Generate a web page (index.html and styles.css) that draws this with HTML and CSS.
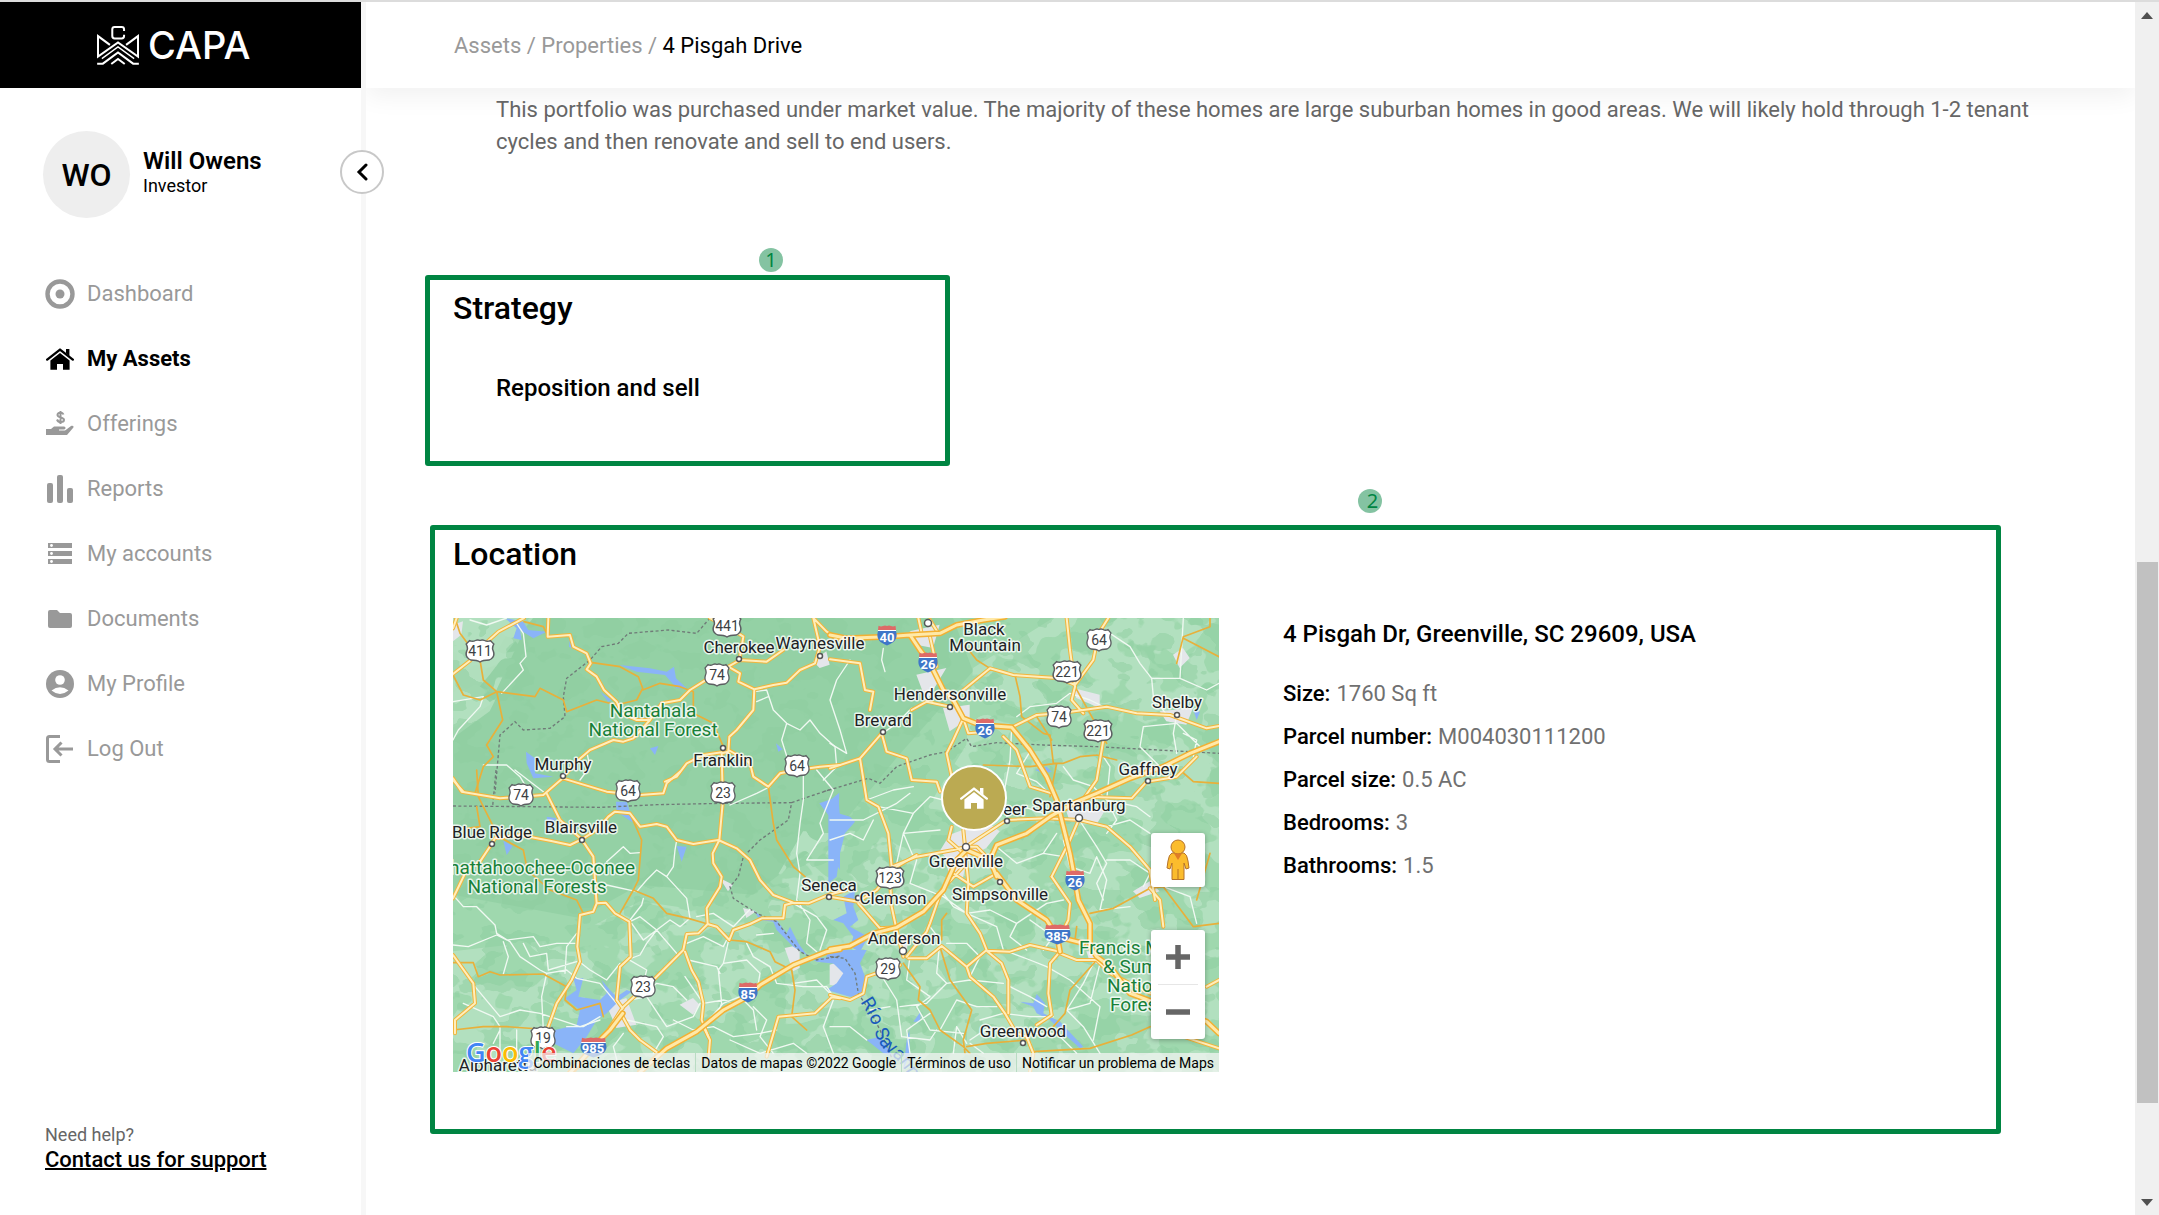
FILE: index.html
```html
<!DOCTYPE html>
<html lang="en">
<head>
<meta charset="utf-8">
<meta name="viewport" content="width=device-width, initial-scale=1">
<title>CAPA – 4 Pisgah Drive</title>
<link rel="stylesheet" href="styles.css">
</head>
<body>
<svg class="defs" aria-hidden="true">
  <defs>
    <symbol id="i-house" viewBox="0 0 28 22">
      <path d="M1.2 11.6 14 1.6 26.8 11.6" fill="none" stroke="currentColor" stroke-width="2.4" stroke-linecap="round" stroke-linejoin="round"/>
      <path d="M20 1h3.4v7L20 5.300zM14 5 23.600 12.400V21.800H17V16h-6v5.800H4.400V12.400z" fill="currentColor"/>
    </symbol>
    <symbol id="us2" viewBox="0 0 26 24" preserveAspectRatio="none">
      <path d="M4 1.500Q6.500 3 9 1.500 11 .5 13 1.500 15 .5 17 1.500 19.500 3 22 1.500L25 5Q23 9 24.500 12 26.500 18 21 21 15.500 21 13 23 10.500 21 5 21-.5 18 1.500 12 3 9 1 5Z" fill="#fff" stroke="#5c5f62" stroke-width="1.300"/>
    </symbol>
    <symbol id="ihw" viewBox="0 0 20 21" preserveAspectRatio="none">
      <path d="M1 6H19Q21 13 16.500 17 13 19 10 20.500 7 19 3.500 17-1 13 1 6Z" fill="#3f76c8"/>
      <path d="M1 5 1.500.8Q4 2 6 1 8 .2 10 1 12 .2 14 1 16 2 18.500.8L19 5Z" fill="#de6a67"/>
      <path d="M1 5.500H19" stroke="#fff"/>
    </symbol>
  </defs>
</svg>

<div class="app">
  <aside class="sidebar">
    <a class="logo" href="#" aria-label="CAPA home">
      <svg class="logo-mark" viewBox="0 0 124 116" fill="none" stroke="#fff" stroke-width="6" aria-hidden="true">
        <path d="M80 15V10Q80 3 73 3H52Q45 3 45 10V30Q45 37 52 37H73Q80 37 80 30V26"/>
        <path d="M38 56 2.500 30V91L62 49 121.500 91V30L86 56"/>
        <path d="M14 97 62 62 110 97" stroke-width="4"/>
        <path d="M0 112H17L62 79 107 112H124"/>
        <path d="M42 113 62 98 82 113"/>
      </svg>
      <span class="logo-text">CAPA</span>
    </a>
    <div class="profile">
      <div class="avatar">WO</div>
      <div class="profile-text">
        <div class="profile-name">Will Owens</div>
        <div class="profile-role">Investor</div>
      </div>
    </div>
    <button class="collapse" type="button" aria-label="Collapse menu">
      <svg viewBox="0 0 12 18" width="12" height="18"><path d="M10 2 3 9l7 7" fill="none" stroke="#000" stroke-width="3" stroke-linecap="round"/></svg>
    </button>
    <nav class="nav">
      <a href="#"><svg viewBox="0 0 30 30"><circle cx="15" cy="15" r="12.500" fill="none" stroke="currentColor" stroke-width="4.400"/><circle cx="15" cy="15" r="4.500" fill="currentColor"/></svg>Dashboard</a>
      <a href="#" class="active"><svg viewBox="-1 -4 30 30"><use href="#i-house" width="28" height="22"/></svg>My Assets</a>
      <a href="#"><svg viewBox="0 0 30 30" fill="currentColor"><path d="M1 20h5l3-2.500h10c2 0 2 3 0 3h-5v1h6l6-4.500c2-1.200 3.500.8 2 2L22 26H1z"/><path d="M18.500 5.500C17.500 3 12.500 3 12.500 6s6.500 2 6.500 4.800-5.500 3.400-7-.3M15.500 2v13" fill="none" stroke="currentColor" stroke-width="2"/></svg>Offerings</a>
      <a href="#"><svg viewBox="0 0 30 30" fill="currentColor"><rect x="2" y="9" width="6" height="20" rx="2"/><rect x="12" y="1" width="6" height="28" rx="2"/><rect x="22" y="14" width="6" height="15" rx="2"/></svg>Reports</a>
      <a href="#"><svg viewBox="0 0 30 30" fill="currentColor"><path d="M3 4h24v5H3zM3 12h24v5H3zM3 20h24v5H3z"/><g fill="#fff"><circle cx="6.500" cy="6.500" r="1.400"/><circle cx="6.500" cy="14.500" r="1.400"/><circle cx="6.500" cy="22.500" r="1.400"/></g></svg>My accounts</a>
      <a href="#"><svg viewBox="0 0 30 30" fill="currentColor"><path d="M5 6h7l3 3h10q2 0 2 2v11q0 2-2 2H5q-2 0-2-2V8q0-2 2-2z"/></svg>Documents</a>
      <a href="#"><svg viewBox="0 0 30 30"><circle cx="15" cy="15" r="14" fill="currentColor"/><circle cx="15" cy="11" r="4.800" fill="#fff"/><path d="M6.500 21.500Q15 15 23.500 21.500 15 28.500 6.500 21.500z" fill="#fff"/></svg>My Profile</a>
      <a href="#"><svg viewBox="0 0 30 30" fill="none" stroke="currentColor" stroke-width="3"><path d="M15 2.500H4.500q-2 0-2 2v21q0 2 2 2H15M28 15H10M16.500 8.500 10 15l6.500 6.500"/></svg>Log Out</a>
    </nav>
    <div class="help">
      <span>Need help?</span>
      <a href="#">Contact us for support</a>
    </div>
  </aside>

  <div class="main">
    <header class="topbar">
      <nav class="crumbs" aria-label="Breadcrumb"><a href="#">Assets</a> / <a href="#">Properties</a> / <span>4 Pisgah Drive</span></nav>
    </header>
    <main class="content">
      <p class="summary">This portfolio was purchased under market value. The majority of these homes are large suburban homes in good areas. We will likely hold through 1-2 tenant cycles and then renovate and sell to end users.</p>

      <section class="card strategy">
        <span class="note note-one">1</span>
        <h2>Strategy</h2>
        <p>Reposition and sell</p>
      </section>

      <section class="card location">
        <span class="note note-two">2</span>
        <h2>Location</h2>
        <div class="location-row">
          <div class="map">
            <svg class="map-art" viewBox="0 0 2298 1362" preserveAspectRatio="xMidYMid slice" aria-hidden="true">
              <defs>
                <filter id="patches" x="0" y="0" width="100%" height="100%" color-interpolation-filters="sRGB">
                  <feTurbulence type="fractalNoise" baseFrequency="0.008 0.010" numOctaves="3" seed="8"/>
                  <feColorMatrix values="0 0 0 0 .70  0 0 0 0 .88  0 0 0 0 .75  0 0 0 40 -19.500"/>
                </filter>
                <filter id="shade" x="0" y="0" width="100%" height="100%" color-interpolation-filters="sRGB">
                  <feTurbulence type="fractalNoise" baseFrequency="0.012 0.016" numOctaves="3" seed="21"/>
                  <feColorMatrix values="0 0 0 0 .56  0 0 0 0 .81  0 0 0 0 .63  0 0 0 40 -22"/>
                </filter>
                <clipPath id="low"><path d="M0 1362V1000L350 960 560 850 900 900 1050 640 1380 640 1540 380 1560 150 1800 0H2298V1362ZM0 0H230L110 260 0 330Z"/></clipPath>
                <g id="minors">
                  <path transform="translate(-99 -354)" d="M105 354 120 400 180 480 190 540 230 575 180 600 130 585 99 525M230 575 345 590 360 565 430 600 440 635 530 600 590 615 650 600 668 565 655 530 600 500 512 487M668 570 720 550 780 560 820 575 820 640 880 670 910 740M230 575 248 660 200 735 220 770 190 800 165 880M312 365 370 380 385 410"/>
                  <path transform="translate(-39 456)" d="M110 0 115 80 160 170 185 205 250 240 262 300 330 360 410 390 430 430M110 110 120 170 80 175M570 130 605 210 595 330 580 360 540 430M580 360 640 385 680 430 745 445 803 462M39 578H100L115 620 150 605 180 615 310 612 380 650 375 690 410 720 480 700 490 740M985 50 1000 160 1010 210 1060 290 1095 320M868 510 920 515 990 545 1005 575 1055 600 1065 660 1055 740 1100 780M340 780 200 770 130 770 39 780"/>
                  <path transform="translate(1131 -54)" d="M400 130 440 180 480 205M1140 54V80L1060 110 1040 190M1060 115 1167 170M555 225 570 290 575 350 640 400 660 405 670 490 700 490 750 470 800 465M460 495 600 500 680 490M620 350 665 420M800 465 860 480M735 260 830 430M670 540 680 490 660 590M1050 510 1090 545 1167 550M1140 760 1100 900"/>
                  <path transform="translate(1131 666)" d="M780 220 850 205 960 145 1000 140 1090 260 1167 250M335 300 335 240 350 220M220 370 270 440 265 480 300 510 330 570 400 620 420 640M330 320 360 420 425 510 400 600 405 640M800 360 720 450 705 520 670 560M410 620 470 610 590 600M610 635 780 625 905 585 960 560M740 260 735 300"/>
                </g>
                <g id="whites">
                  <path transform="translate(-99 -354)" d="M150 360 200 375 260 354M290 370 310 400 318 470 300 490 310 510 245 580M99 605 190 590 180 620 115 690 99 720M190 795 260 795 300 830 330 880M500 755 510 800 480 840M1003 575 1040 570 1060 630 1100 670 1140 690 1170 660 1200 700 1245 740 1250 800 1210 840M1100 670 1085 720 1110 800M1010 605 1045 590"/>
                  <path transform="translate(-39 456)" d="M225 0 310 65M500 275 550 230 570 250 600 248M710 212 705 240 700 290 680 320 740 385 750 445 720 470 690 450 650 480 600 440 570 455M680 320 650 300 620 330 590 365 500 345M610 385 605 405 570 450M39 375 70 410 110 410 165 465 170 490 210 515 240 560 300 600 320 610 305 680 310 780M39 525 85 530 170 495 200 510 280 500 300 530 350 520 405 520M190 612 205 560 190 515M250 520 270 560 320 550 325 600 410 575M375 610 380 530 410 490M418 575 450 600 500 630 540 580M575 460 610 510 650 480 710 550M560 565 620 600 610 640M770 440 820 430 880 470 930 418M650 480 620 520 600 555 560 570M740 520 790 500 850 530 860 510M865 515 850 580 835 600 845 700 830 740M850 580 920 570 960 610 955 640M745 570 830 590 840 610M735 620 790 700 850 690 890 700M320 610 380 600 410 625 480 640 530 700M105 650 180 740 240 720 300 730 420 770 480 750M570 690 620 680 680 770 760 740 780 700M600 680 650 640 700 650 740 690M780 780 850 700 900 680 940 720 950 780M1090 0 1090 90 1080 160 1070 250 1080 310 1070 390 1110 450 1100 520 1130 545M1130 0 1180 60 1140 160 1150 190 1100 270 1180 270M1000 490 950 495M920 520 940 560 990 590 1010 640 1090 650 1160 650 1180 680M1060 400 1130 440 1160 480 1140 540M870 105 950 70 990 50"/>
                  <path transform="translate(-39 666)" d="M70 490 160 530 180 560 180 630M180 570 160 610M230 570V640M550 580 520 620 540 696M560 540 650 560 670 590 640 640M700 540 760 570 820 560 880 590 960 580 1010 570M870 600 960 640 1060 610 1100 640M940 500 980 540 960 590 1000 640M1180 470 1130 420 1060 430M1180 480 1150 560 1180 640M380 560 430 560 480 530"/>
                  <path transform="translate(1131 -54)" d="M160 145 155 180 165 215M0 430 50 460 30 390 0 300 20 240 60 180M245 325 200 370 165 395M560 350 600 320 680 310 720 280 780 300 820 320M840 100 900 140 930 190 965 235 1050 235 1060 54M965 235 970 290 1010 345M1050 235 1130 270 1167 250M940 380 1040 370 1080 410 1120 450M940 380 930 440 990 500M1040 345 1030 400 1040 460M1060 400 1100 420 1090 470M545 385 540 480 520 590 530 650M600 455 560 520 620 545 680 600M700 500 730 540 790 560 830 600 920 620 960 650M820 470 840 500 830 600 860 660 830 700M110 600 190 570 250 560M0 660 100 660 200 610 240 580M145 620 250 640 300 590 340 600M200 790 220 700 250 640M0 720 60 700 100 720 130 660M250 770 220 700 330 690M530 650 580 620 640 640M500 740 560 790 640 760 680 700M640 760 700 770M748 660 800 740 830 790 800 850 820 900M830 680 900 660 960 700"/>
                  <path transform="translate(1131 666)" d="M260 60 240 130 340 170 410 220 370 200 340 160M410 220 480 210 560 250 540 290 590 330M560 250 650 190 700 180M600 240 670 290 640 330M410 220 500 260 520 330M240 350 230 420 300 470 260 500 300 570 400 580M150 400 200 480 215 590 300 600 320 570M180 500 120 510M210 500 290 490 350 430 420 420 520 430M300 260 330 300 320 400 350 430M420 410 450 350 410 310 350 310M520 330 600 360 650 380M540 440 600 470 650 500M450 540 520 520 600 530 670 530M420 600 480 560 530 580M330 570 380 480 440 500 500 500M710 510 780 490 810 370M710 510 760 560 810 640M650 380 720 420 810 500 790 600M700 0 720 80 780 100 800 50 830 120 810 210 900 200M830 60 900 60 960 100 940 140M1000 140 1080 170 1100 250M410 610 380 560 370 640M420 610 460 640M600 580 680 580 740 640M240 640 230 570 300 520M800 350 760 430 710 510M0 560 60 560 110 600"/>
                </g>
                <g id="majors">
                  <path transform="translate(-99 -354)" d="M99 522 150 482 180 445 235 395 312 354M385 354 383 410 450 405 460 440 500 460 512 490 500 508 530 530 552 570 590 605 605 640 650 660 690 660 725 610 780 600 810 570 850 545 925 500 960 520 955 545 1003 568M925 500 960 480 1040 485 1090 450M960 470 970 410 930 385 870 354M1003 568 1060 555 1100 548 1140 510 1185 490 1200 440 1180 354 1220 395 1260 420M1003 568 1000 630 950 690 928 710 925 755 905 760M690 660 640 715 610 725 580 720 510 750 475 780 430 830M905 757 850 765 800 790 770 830 735 845M925 750 970 775 990 790 1000 830 1045 860 1080 820 1130 810 1200 800 1260 795M905 760 908 878M110 354 99 385M99 840 130 875"/>
                  <path transform="translate(-39 456)" d="M39 25 65 65 180 85 310 75 368 25 500 65 600 75 670 70 680 40 720 5M320 70 360 150 425 208 460 260 470 400 460 425 420 435 412 530 420 575 395 630 350 700 325 770 300 820M425 208 390 225 330 212 240 195 165 205 155 222 120 275 80 300 39 385M425 208 470 180 505 140 525 125 570 130 600 170 650 162 680 170 710 210 760 222 835 210 890 235 930 270 960 330 1000 375 1060 398 1105 400 1165 375 1220 360M848 100 838 210 818 250 820 280 845 320 840 350 800 415 803 462 775 490 740 492 730 540 640 630 610 655 550 710 505 780M470 400 497 398 525 430 568 455 572 560 540 590 530 690 548 715M803 462 830 470 868 510 880 480 930 462 965 445 1030 445 1035 405 1060 398M735 545 755 600 775 635 790 700 785 750 805 800M39 555 100 640 105 700 45 750 45 790M980 860 1015 740 1125 730 1175 682 1200 685"/>
                  <path transform="translate(-39 666)" d="M548 530 570 570 600 600 655 640M790 560 810 600 805 660M505 570 460 620 400 696"/>
                  <path transform="translate(1131 -54)" d="M265 54 275 100M325 100 300 60M300 110 320 200M0 505 90 475 155 400 170 455 230 475 245 540 320 545 330 575M90 475 110 600 145 620 175 700 185 800M245 330 290 305 360 320M400 355 370 420 350 460 365 530M0 178 90 190 105 270 130 275 120 330M710 54 720 150 735 260 725 300 760 340M835 54 806 100 790 180 735 255 690 235 550 225 480 205 400 270M545 382 620 345 690 340 830 320 920 340 1020 345 1130 385 1167 378M820 420 800 540 765 590M520 410 560 450 600 560 665 580M408 740 500 680 530 660 650 655 748 660 830 680 900 740 960 810 975 900M748 655 720 720 665 830M765 590 905 595 950 545 1040 530 1100 470M400 355 415 400 470 395M365 680 355 720 400 760M400 690 405 740M185 800 260 770 370 750 410 740"/>
                  <path transform="translate(1131 666)" d="M690 335 660 370 655 460 665 525 620 555M560 580 590 590 610 640 600 696M690 335 600 315 540 335 470 332M690 340 740 360 800 360 840 400 960 460M235 355 290 355 335 318 410 380 420 410 490 470 525 520 560 580M410 380 470 330 450 280 410 220 415 130 405 30M470 332 515 370 535 420 535 520M220 350 200 270 185 200 180 120M400 80 335 150 300 250 290 275 230 350M210 375 110 410 100 460 60 480 0 465M85 190 150 265 200 262M0 170 85 185 140 150 200 80 260 45M665 110 720 190 715 240 690 290M960 145 990 180 1000 260M370 100 430 140 500 100 480 60 440 20 408 20M1130 440 1167 420M1060 590 1167 625"/>
                </g>
                <g id="motorways">
                  <path transform="translate(-39 666)" d="M600 696 680 625 770 575 850 510 924 470 960 435 1060 375 1160 335 1200 328"/>
                  <path transform="translate(1131 666)" d="M0 328 60 318 130 280 200 262 280 215 340 150 380 60 410 30M500 100 560 180 650 240 682 290 690 335M735 120 745 180 780 250 780 320 800 350 840 380 900 460 1130 545 1167 580M682 290 760 310"/>
                  <path transform="translate(1131 -54)" d="M410 750 480 780 500 735 590 700 660 650 740 605 800 580 900 535 1000 500 1080 460 1167 425M480 780 500 830M240 105 270 150 300 190 340 270 370 300 400 355 450 375 545 382 600 450 650 530 680 600 700 680 720 760 735 840M0 105 50 115 170 110 240 105 330 100 380 75 460 60 525 50"/>
                  <path transform="translate(-39 666)" d="M548 520 510 570 460 620 380 710"/>
                </g>
              </defs>
              <rect width="2298" height="1362" fill="#9fd8ae"/>
              <path fill="#94d1a5" d="M190 0H1500L1560 160 1330 420 1150 640 900 830 560 800 380 900 0 830V330Z"/>
              <path fill="#b5e1c0" d="M0 0H240L110 170 0 300ZM0 320 130 240 110 280 0 360Z" opacity=".8"/>
              <g clip-path="url(#low)"><rect width="2298" height="1362" filter="url(#patches)"/></g>
              <rect width="2298" height="1362" filter="url(#shade)" opacity=".5"/>
              <path fill="#e4e6ea" d="M0 20 30 10 25 50 0 70ZM1370 40 1460 20 1440 90 1390 80ZM1390 170 1480 150 1450 200 1420 250ZM1470 270 1550 260 1550 300 1490 340ZM1860 210 1940 230 1940 270 1870 240ZM2160 110 2190 90 2210 120 2180 150ZM2120 280 2220 270 2200 320 2140 310ZM1490 650 1600 610 1640 640 1600 690 1500 740 1460 700ZM1840 580 1960 570 1930 620 1850 610ZM1080 130 1120 100 1130 140 1100 150ZM800 780 840 800 825 820ZM870 870 910 880 880 900ZM995 990 1040 980 1040 1050 1020 1060ZM460 1160 520 1140 550 1220 490 1230ZM720 1140 740 1160 720 1190 680 1160ZM2040 820 2090 790 2120 820 2060 840ZM1320 960 1370 950 1360 1000ZM1180 1110 1130 1100 1130 1040 1190 1020ZM1480 740 1540 730 1530 780 1490 770ZM1900 1000 1940 1000 1940 1040 1910 1030Z"/>
              <g fill="#8ab4f8">
                <path transform="translate(-99 -354)" d="M255 354 310 365 325 390 380 395 340 415 300 390 305 420 280 415 290 385ZM598 495 690 505 740 515 762 500 768 535 800 565 770 565 735 525 650 515ZM540 575 575 600 565 605ZM318 755 345 775 345 820 400 830 340 835 320 790ZM690 745 715 738 705 765ZM1068 730 1088 748 1075 755ZM450 415 455 445 447 440Z"/>
                <path transform="translate(-39 456)" d="M528 95 560 95 575 140 590 155 575 155 530 125ZM320 140 350 145 330 165 325 185ZM190 212 218 228 200 255ZM710 228 740 230 725 275ZM1138 100 1195 80 1200 140 1165 135ZM940 420 970 445 1010 450 1040 490 1050 470 1075 520 1100 555 1150 565 1220 545V585L1130 575 1060 530 1010 480 1000 455 960 450ZM1180 200 1200 220V300L1175 260Z"/>
                <path transform="translate(-39 666)" d="M400 415 430 415 415 470 480 480 500 460 485 420 510 450 530 470 560 450 575 455 540 480 500 520 470 540 440 590 400 640 340 610 345 570 410 555 420 510 375 475 410 450Z"/>
                <path transform="translate(1131 -54)" d="M-5 605 28 578 25 640 60 650 75 665 45 700 30 760 20 830 -5 850ZM1090 330 1110 335 1100 360ZM615 510 650 500 665 515 640 520Z"/>
                <path transform="translate(1131 666)" d="M-10 330 110 330 90 370 105 410 100 470 60 470 -10 450 20 430 40 400 -10 350ZM40 170 75 150 70 200 85 240 60 260 115 290 90 335 60 320 70 290 40 250 10 240 50 220ZM570 485 610 490 620 462 645 490 640 520 690 545 760 620 750 625 700 580 660 540 620 520 610 500ZM250 545 272 515 270 545ZM238 570 240 640 220 690 230 600ZM110 600 150 590 190 650 160 640Z"/>
              </g>
              <g fill="none" stroke="#707b78" stroke-width="4" stroke-dasharray="9 7">
                <path transform="translate(-99 -354)" d="M870 354 830 400 745 390 625 400 595 430 545 440 510 480 440 535 430 590 435 650 390 685 310 690 285 665 240 705 225 880"/>
                <path transform="translate(-39 456)" d="M168 0 158 108M39 108 480 112 650 104 850 100 1055 98 1045 150 960 210 910 260 895 320 870 350 880 385 950 430 1010 455 1080 545 1130 570 1200 558M1055 98 1180 55"/>
                <path transform="translate(1131 -54)" d="M-20 575 115 535 150 550 200 500 300 465 350 455 410 415 425 440 500 428 640 435 800 440 1167 460"/>
                <path transform="translate(1131 666)" d="M0 350 45 355 75 400 85 460 130 530 150 570 200 690"/>
              </g>
              <use href="#whites" class="road road-white"/>
              <use href="#minors" class="road road-minor"/>
              <use href="#majors" class="road road-casing"/>
              <use href="#majors" class="road road-core"/>
              <use href="#motorways" class="road motorway-casing"/>
              <use href="#motorways" class="road motorway-core"/>
            </svg>
            <svg class="map-art" viewBox="0 0 766 454" preserveAspectRatio="xMidYMid slice" role="img" aria-label="Map around Greenville, South Carolina">
              <defs><path id="river" d="M407 384Q416 397 420 409 424 424 432 432 450 444 462 470 480 500 500 520"/></defs>
              <g fill="#fff" stroke="#555" stroke-width="1.500">
                <circle cx="286" cy="41" r="2.500"/><circle cx="367" cy="38" r="2.500"/><circle cx="475" cy="5" r="3.500"/><circle cx="497" cy="89" r="2.500"/><circle cx="430" cy="114" r="2.500"/><circle cx="724" cy="97" r="2.500"/><circle cx="695" cy="163" r="2.500"/><circle cx="626" cy="200" r="3.500"/><circle cx="554" cy="203" r="2.500"/><circle cx="513" cy="229" r="3.500"/><circle cx="547" cy="264" r="2.500"/><circle cx="405" cy="280" r="2.500"/><circle cx="376" cy="279" r="2.500"/><circle cx="450" cy="333" r="3.500"/><circle cx="570" cy="425" r="2.500"/><circle cx="110" cy="158" r="2.500"/><circle cx="270" cy="130" r="2.500"/><circle cx="129" cy="222" r="2.500"/><circle cx="39" cy="226" r="2.500"/>
              </g>
              <g class="shield">
                <use href="#us2" x="12" y="21" width="30" height="24"/><text x="27" y="38">411</text>
                <use href="#us2" x="259" y="-4" width="30" height="24"/><text x="274" y="13">441</text>
                <use href="#us2" x="251" y="45" width="26" height="24"/><text x="264" y="62">74</text>
                <use href="#us2" x="331" y="136" width="26" height="24"/><text x="344" y="153">64</text>
                <use href="#us2" x="162" y="161" width="26" height="24"/><text x="175" y="178">64</text>
                <use href="#us2" x="257" y="163" width="26" height="24"/><text x="270" y="180">23</text>
                <use href="#us2" x="55" y="165" width="26" height="24"/><text x="68" y="182">74</text>
                <use href="#us2" x="633" y="10" width="26" height="24"/><text x="646" y="27">64</text>
                <use href="#us2" x="599" y="42" width="30" height="24"/><text x="614" y="59">221</text>
                <use href="#us2" x="593" y="87" width="26" height="24"/><text x="606" y="104">74</text>
                <use href="#us2" x="630" y="101" width="30" height="24"/><text x="645" y="118">221</text>
                <use href="#us2" x="422" y="248" width="30" height="24"/><text x="437" y="265">123</text>
                <use href="#us2" x="422" y="339" width="26" height="24"/><text x="435" y="356">29</text>
                <use href="#us2" x="177" y="357" width="26" height="24"/><text x="190" y="374">23</text>
                <use href="#us2" x="77" y="408" width="26" height="24"/><text x="90" y="425">19</text>
              </g>
              <g class="shield interstate">
                <use href="#ihw" x="424" y="7" width="20" height="21"/><text x="434" y="24">40</text>
                <use href="#ihw" x="465" y="34" width="20" height="21"/><text x="475" y="51">26</text>
                <use href="#ihw" x="522" y="100" width="20" height="21"/><text x="532" y="117">26</text>
                <use href="#ihw" x="612" y="252" width="20" height="21"/><text x="622" y="269">26</text>
                <use href="#ihw" x="591" y="306" width="27" height="21"/><text x="604" y="323">385</text>
                <use href="#ihw" x="285" y="364" width="20" height="21"/><text x="295" y="381">85</text>
                <use href="#ihw" x="127" y="419" width="27" height="21"/><text x="140" y="435">985</text>
              </g>
              <g class="place">
                <text x="286" y="35">Cherokee</text><text x="367" y="31">Waynesville</text><text x="531" y="17">Black</text><text x="532" y="33">Mountain</text><text x="497" y="82">Hendersonville</text><text x="430" y="108">Brevard</text><text x="724" y="90">Shelby</text><text x="695" y="157">Gaffney</text><text x="626" y="193">Spartanburg</text><text x="562" y="197">eer</text><text x="513" y="249">Greenville</text><text x="547" y="282">Simpsonville</text><text x="440" y="286">Clemson</text><text x="376" y="273">Seneca</text><text x="451" y="326">Anderson</text><text x="570" y="419">Greenwood</text><text x="110" y="152">Murphy</text><text x="270" y="148">Franklin</text><text x="128" y="215">Blairsville</text><text x="39" y="220">Blue Ridge</text><text x="45" y="453">Alpharetta</text>
              </g>
              <g class="place forest">
                <text x="200" y="99">Nantahala</text><text x="200" y="118">National Forest</text><text x="84" y="275">National Forests</text>
                <text class="end" x="182" y="256">Chattahoochee-Oconee</text>
                <g class="start"><text x="626" y="336">Francis M</text><text x="650" y="355">&amp; Sum</text><text x="654" y="374">Natio</text><text x="657" y="393">Fores</text></g>
              </g>
              <text class="water"><textPath href="#river">Río Savannah</textPath></text>
              <text class="google" x="13" y="444"><tspan fill="#4285f4">G</tspan><tspan fill="#ea4335">o</tspan><tspan fill="#fbbc04">o</tspan><tspan fill="#4285f4">g</tspan><tspan fill="#34a853">l</tspan><tspan fill="#ea4335">e</tspan></text>
            </svg>
            <button class="marker" type="button" aria-label="4 Pisgah Drive"><svg viewBox="0 0 28 22" width="28" height="22"><use href="#i-house"/></svg></button>
            <div class="map-controls">
              <button class="map-btn" type="button" aria-label="Street View">
                <svg viewBox="0 0 24 42" width="24" height="42"><g fill="#fbbc2d" stroke="#b5722a" stroke-width="1"><path d="M6 14h12q3 1 4 8l1 7-3 1-2-6v16.500H6V24l-2 6-3-1 1-7q1-7 4-8z"/><path d="M12 30v10" fill="none"/><circle cx="12" cy="8" r="7"/></g><path d="M8 14.500h8L12 21z" fill="#e07c26"/></svg>
              </button>
              <div class="zoom">
                <button type="button" aria-label="Zoom in"><svg viewBox="0 0 26 26" width="26" height="26"><path d="M13 1v24M1 13h24" stroke="#666" stroke-width="5.500"/></svg></button>
                <button type="button" aria-label="Zoom out"><svg viewBox="0 0 26 26" width="26" height="26"><path d="M1 13h24" stroke="#666" stroke-width="5.500"/></svg></button>
              </div>
            </div>
            <div class="credits"><a href="#">Combinaciones de teclas</a><span>Datos de mapas ©2022 Google</span><a href="#">Términos de uso</a><a href="#">Notificar un problema de Maps</a></div>
          </div>
          <div class="details">
            <h3>4 Pisgah Dr, Greenville, SC 29609, USA</h3>
            <dl>
              <div><dt>Size:</dt><dd>1760 Sq ft</dd></div>
              <div><dt>Parcel number:</dt><dd>M004030111200</dd></div>
              <div><dt>Parcel size:</dt><dd>0.5 AC</dd></div>
              <div><dt>Bedrooms:</dt><dd>3</dd></div>
              <div><dt>Bathrooms:</dt><dd>1.5</dd></div>
            </dl>
          </div>
        </div>
      </section>
    </main>
  </div>

  <div class="scrollbar" aria-hidden="true">
    <svg viewBox="0 0 12 7" width="12" height="7"><path d="M6 0l6 7H0z" fill="#505050"/></svg>
    <div class="track"><div class="thumb"></div></div>
    <svg viewBox="0 0 12 7" width="12" height="7"><path d="M0 0h12L6 7z" fill="#505050"/></svg>
  </div>
</div>
</body>
</html>
```
FILE: styles.css
```css
* { box-sizing: border-box; }
body {
  margin: 0;
  font-family: Roboto, "Liberation Sans", sans-serif;
  font-size: 22px;
  line-height: 32px;
  color: #000;
  background: #fff;
}
h2, h3, p, dl, dd { margin: 0; }
a { color: inherit; text-decoration: none; }
button { padding: 0; border: 0; background: #fff; cursor: pointer; display: flex; align-items: center; justify-content: center; }
.defs { display: none; }

.app {
  display: flex;
  height: 100vh;
  overflow: hidden;
  border-top: 2px solid #dcdcdc;
}

/* Sidebar */
.sidebar {
  position: relative;
  z-index: 2;
  flex: 0 0 366px;
  display: flex;
  flex-direction: column;
  background: #fff;
  border-right: 5px solid #f7f7f7;
}
.logo {
  display: flex;
  align-items: center;
  gap: 9px;
  height: 86px;
  padding-left: 97px;
  color: #fff;
  background: #000;
}
.logo-mark { width: 42px; height: 39px; }
.logo-text { font-family: Inter, sans-serif; font-size: 38px; font-weight: 500; }
.profile {
  display: flex;
  align-items: center;
  gap: 13px;
  margin: 43px 0 0 43px;
}
.profile-text { padding-bottom: 3px; }
.avatar {
  display: flex;
  align-items: center;
  justify-content: center;
  width: 87px;
  height: 87px;
  border-radius: 50%;
  background: #eee;
  font-size: 32px;
  font-weight: 500;
}
.profile-name { font-size: 24px; line-height: 26px; font-weight: 600; }
.profile-role { font-size: 18px; line-height: 24px; }
.collapse {
  position: absolute;
  top: 148px;
  right: -23px;
  width: 44px;
  height: 44px;
  border: 2px solid #c8c8c8;
  border-radius: 50%;
}
.nav { margin: 43px 0 0 45px; color: #999; }
.nav a { display: flex; align-items: center; gap: 12px; height: 65px; }
.nav svg { width: 30px; height: 30px; }
.nav .active { color: #000; font-weight: 700; }
.help {
  display: flex;
  flex-direction: column;
  align-items: flex-start;
  margin: auto 0 42px 45px;
  font-size: 18px;
  line-height: 24px;
  color: #666;
}
.help a { font-size: 22px; line-height: 26px; font-weight: 500; color: #000; text-decoration: underline; text-decoration-thickness: 2px; }

/* Main column */
.main { flex: 1; min-width: 0; display: flex; flex-direction: column; }
.topbar {
  display: flex;
  align-items: center;
  flex: 0 0 86px;
  padding: 2px 88px 0;
  background: #fff;
  box-shadow: 0 8px 24px rgba(0, 0, 0, .06);
}
.crumbs { color: #999; }
.crumbs span { color: #000; }
.content { padding: 6px 134px 0 59px; }
.summary { padding-left: 71px; color: #666; margin-right: -48px; }

.card {
  position: relative;
  border: 5px solid #008542;
  border-radius: 3px;
}
.card h2 { font-size: 32px; line-height: 40px; font-weight: 500; }
.note {
  position: absolute;
  width: 24px;
  height: 24px;
  border-radius: 50%;
  background: #84c3a2;
  color: #008542;
  font: 20px/24px "Noto Sans", sans-serif;
  text-align: center;
}
.note-one { left: 329px; top: -32px; }
.note-two { left: 923px; top: -41px; padding-left: 5px; }
.strategy { width: 525px; margin-top: 117px; padding: 8px 23px 57px; }
.strategy p { margin: 44px 0 0 43px; font-size: 24px; line-height: 32px; font-weight: 500; }
.location { margin: 59px 0 0 5px; padding: 4px 18px 57px; }
.location-row { display: flex; align-items: flex-start; gap: 64px; margin-top: 44px; }

/* Map */
.map { position: relative; flex: 0 1 766px; aspect-ratio: 766 / 454; overflow: hidden; background: #9dd6ad; }
.map-art { position: absolute; inset: 0; width: 100%; height: 100%; }
.road { fill: none; stroke-linejoin: round; stroke-linecap: round; }
.road-white { stroke: #f0f9f2; stroke-width: 4; }
.road-minor { stroke: #e8b03a; stroke-width: 5; }
.road-casing { stroke: #f1b53c; stroke-width: 12; }
.road-core { stroke: #ffeebb; stroke-width: 6; }
.motorway-casing { stroke: #f3b033; stroke-width: 18; }
.motorway-core { stroke: #ffe9a8; stroke-width: 9; }
.shield text { font-size: 14px; fill: #3c4043; text-anchor: middle; }
.shield.interstate text { font-size: 13px; font-weight: 700; fill: #fff; }
.place text { font-size: 17px; fill: #202124; text-anchor: middle; stroke: #fff; stroke-opacity: .8; stroke-width: 3px; paint-order: stroke; stroke-linejoin: round; }
.place.forest text { font-size: 19px; fill: #188038; }
.place.forest .end { text-anchor: end; }
.place.forest .start text { text-anchor: start; }
.water { font-size: 19px; fill: #185abc; }
.google { font-size: 27px; font-family: "Open Sans", sans-serif; font-weight: 600; stroke: #fff; stroke-width: 2px; paint-order: stroke; }
.marker {
  position: absolute;
  left: calc(68% - 33px);
  top: 147px;
  width: 66px;
  height: 66px;
  border: 2px solid #fff;
  border-radius: 50%;
  color: #fff;
  background: #bbaa52;
}
.map-controls { position: absolute; right: 14px; bottom: 33px; display: flex; flex-direction: column; gap: 43px; }
.map-btn, .zoom { width: 54px; border-radius: 3px; background: #fff; box-shadow: 0 1px 5px rgba(0, 0, 0, .3); }
.map-btn { height: 54px; }
.zoom { padding: 0 7px; }
.zoom button { width: 100%; height: 54px; }
.zoom button + button { height: 55px; border-top: 1px solid #e6e6e6; }
.credits {
  position: absolute;
  right: 0;
  bottom: 0;
  display: flex;
  height: 19px;
  font-size: 14px;
  line-height: 21px;
  background: rgba(245, 245, 245, .72);
  white-space: nowrap;
}
.credits > * { padding: 0 5px; }
.credits > * + * { border-left: 1px solid #b9dcc3; }

/* Property details */
.details h3 { font-size: 24px; line-height: 32px; font-weight: 500; }
.details dl { margin-top: 22px; }
.details dl div { display: flex; gap: 6px; height: 43px; align-items: center; }
.details dt { font-weight: 500; }
.details dd { color: #707070; }

/* Page scroll rail */
.scrollbar {
  flex: 0 0 24px;
  display: flex;
  flex-direction: column;
  align-items: center;
  padding: 10px 0 9px;
  background: #f0f0f0;
}
.track { flex: 1; width: 21px; display: flex; flex-direction: column; justify-content: flex-end; padding-bottom: 96px; }
.thumb { flex: 0 1 541px; background: #c1c1c1; }
```
